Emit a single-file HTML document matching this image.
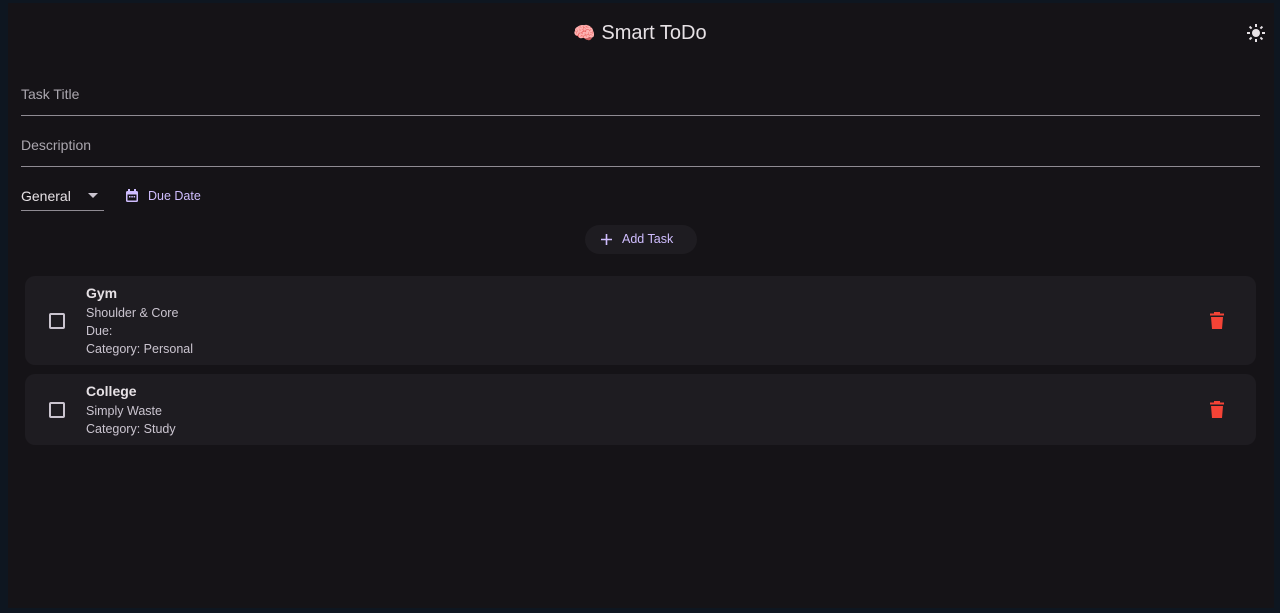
<!DOCTYPE html>
<html><head><meta charset="utf-8"><style>
*{box-sizing:border-box;margin:0;padding:0}
body{width:1280px;height:613px;background:#0e1620;font-family:"Liberation Sans",sans-serif;position:relative;overflow:hidden}
.main{position:absolute;left:8px;top:3px;width:1266px;height:605px;background:#151317}
.abs{position:absolute}
.title{left:0;width:1280px;top:22px;text-align:center;color:#e6e1e5;font-size:20px}
.lbl{color:#aaa6ae;font-size:14px;left:21px}
.line{left:21px;width:1239px;height:1px;background:#8f8b93}
.card{left:25px;width:1231px;background:#1e1c21;border-radius:10px}
.cb{left:49px;width:16px;height:16px;border:2px solid #cac4cf;border-radius:2px}
.t{left:86px;color:#e6e1e5;font-weight:bold;font-size:14px}
.s{left:86px;color:#cac4cf;font-size:12.5px}
</style></head><body>
<div class="main"></div>
<div class="abs title"><span style="font-size:18px">🧠</span> Smart ToDo</div>
<svg class="abs" style="left:1246px;top:23px" width="20" height="20" viewBox="0 0 20 20"><circle cx="10" cy="10" r="4" fill="#e6e1e5"/><g stroke="#e6e1e5" stroke-width="2"><path d="M10 1v3M10 16v3M1 10h3M16 10h3M3.6 3.6l2 2M14.4 14.4l2 2M3.6 16.4l2-2M14.4 5.6l2-2"/></g></svg>
<div class="abs lbl" style="top:86px">Task Title</div>
<div class="abs line" style="top:115px"></div>
<div class="abs lbl" style="top:137px">Description</div>
<div class="abs line" style="top:166px"></div>
<div class="abs" style="left:21px;top:188px;color:#e6e1e5;font-size:14px">General</div>
<svg class="abs" style="left:88px;top:193px" width="10" height="5"><path d="M0 0h10L5 5z" fill="#cac4cf"/></svg>
<div class="abs" style="left:21px;top:210px;width:83px;height:1px;background:#8f8b93"></div>
<svg class="abs" style="left:125px;top:189px" width="14" height="14" viewBox="0 0 14 14"><rect x="1" y="2" width="12" height="11" rx="1.5" fill="#cfbdfe"/><rect x="2.5" y="5.5" width="9" height="6" fill="#151317"/><rect x="3" y="0" width="2" height="3" fill="#cfbdfe"/><rect x="9" y="0" width="2" height="3" fill="#cfbdfe"/><rect x="4" y="7" width="1.5" height="1.5" fill="#cfbdfe"/><rect x="6.3" y="7" width="1.5" height="1.5" fill="#cfbdfe"/><rect x="8.6" y="7" width="1.5" height="1.5" fill="#cfbdfe"/></svg>
<div class="abs" style="left:148px;top:189px;color:#cfbdfe;font-size:12.5px">Due Date</div>
<div class="abs" style="left:585px;top:225px;width:112px;height:29px;border-radius:15px;background:#1e1c21"></div>
<svg class="abs" style="left:601px;top:234px" width="11" height="11"><path d="M5.5 0v11M0 5.5h11" stroke="#cfbdfe" stroke-width="1.6"/></svg>
<div class="abs" style="left:622px;top:232px;color:#cfbdfe;font-size:12.5px">Add Task</div>

<div class="abs card" style="top:276px;height:89px"></div>
<div class="abs cb" style="top:313px"></div>
<div class="abs t" style="top:285px">Gym</div>
<div class="abs s" style="top:306px">Shoulder &amp; Core</div>
<div class="abs s" style="top:324px">Due:</div>
<div class="abs s" style="top:342px">Category: Personal</div>
<svg class="abs" style="left:1210px;top:312px" width="14" height="17" viewBox="0 0 14 17"><path d="M4 0h6v1.5h4v2H0v-2h4z M1 5h12l-1 12H2z" fill="#f44336"/></svg>

<div class="abs card" style="top:374px;height:71px"></div>
<div class="abs cb" style="top:402px"></div>
<div class="abs t" style="top:383px">College</div>
<div class="abs s" style="top:404px">Simply Waste</div>
<div class="abs s" style="top:422px">Category: Study</div>
<svg class="abs" style="left:1210px;top:401px" width="14" height="17" viewBox="0 0 14 17"><path d="M4 0h6v1.5h4v2H0v-2h4z M1 5h12l-1 12H2z" fill="#f44336"/></svg>
</body></html>
